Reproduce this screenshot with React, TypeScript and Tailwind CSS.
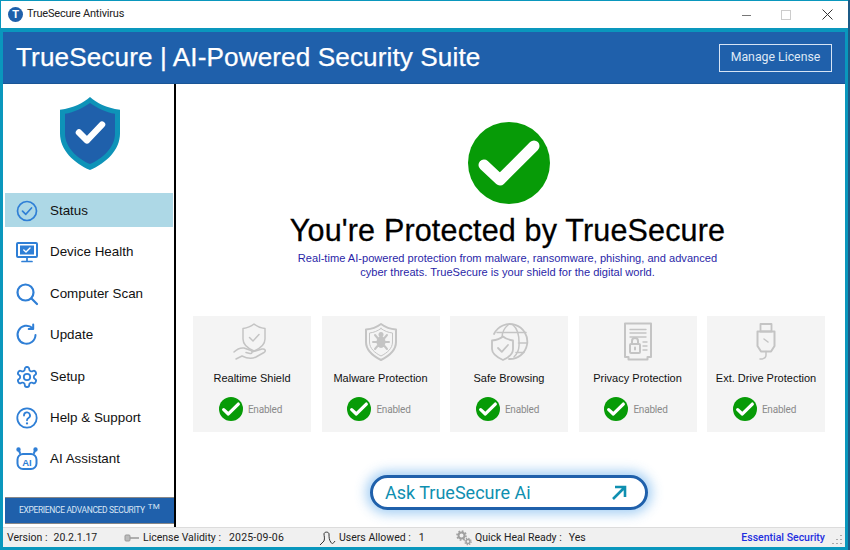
import type { ReactNode } from 'react'

const arial = 'font-["Liberation_Sans",Arial,sans-serif]'
const segoe = 'font-["Roboto",sans-serif]'

function Check({ size }: { size: number }) {
  return (
    <svg width={size} height={size} viewBox="0 0 82 82" className="shrink-0">
      <circle cx="41" cy="41" r="41" fill="#079b07" />
      <path d="M16 43 L32 58 L66 24" fill="none" stroke="#fff" strokeWidth="11" strokeLinecap="round" strokeLinejoin="round" />
    </svg>
  )
}

function Shield() {
  return (
    <svg width="62" height="75" viewBox="0 0 62 76" preserveAspectRatio="none">
      <path d="M31 1 C38 7 47 12 61 14 L61 38 C61 55 47 68 31 75 C15 68 1 55 1 38 L1 14 C15 12 24 7 31 1 Z" fill="#0e93b8" />
      <path d="M31 7 C38 12 47 16.500 56 18 L56 38 C56 52 44 63 31 69 C18 63 6 52 6 38 L6 18 C15 16.500 24 12 31 7 Z" fill="#1f60ab" />
      <path d="M20 37 L28 45 L43 29" fill="none" stroke="#fff" strokeWidth="6.500" strokeLinecap="round" strokeLinejoin="round" />
    </svg>
  )
}

const navIcon = { width: 24, height: 24, viewBox: '0 0 24 24', fill: 'none', stroke: '#2f7fd6', strokeWidth: 1.7, strokeLinecap: 'round', strokeLinejoin: 'round' } as const

const navItems: { label: string; icon: ReactNode }[] = [
  {
    label: 'Status',
    icon: (
      <svg {...navIcon}>
        <circle cx="12" cy="12" r="9.500" />
        <path d="M7.500 12.200 L10.800 15.300 L16.500 9" />
      </svg>
    ),
  },
  {
    label: 'Device Health',
    icon: (
      <svg {...navIcon}>
        <rect x="2" y="3" width="20" height="14" rx="1" strokeWidth="2" />
        <rect x="5" y="5.500" width="14" height="9" fill="#2f7fd6" stroke="none" />
        <path d="M8.800 10 L11 12 L15 8" stroke="#fff" strokeWidth="1.400" />
        <path d="M12 17 V21 M7 21.500 H17" />
      </svg>
    ),
  },
  {
    label: 'Computer Scan',
    icon: (
      <svg {...navIcon} strokeWidth={2.200}>
        <circle cx="10.500" cy="10.500" r="8" />
        <path d="M16.500 16.500 L22 22" />
      </svg>
    ),
  },
  {
    label: 'Update',
    icon: (
      <svg {...navIcon} strokeWidth={2}>
        <path d="M20.500 12 A9 9 0 1 1 17.500 5" />
        <path d="M18.200 1.500 V6 H13.700" />
      </svg>
    ),
  },
  {
    label: 'Setup',
    icon: (
      <svg {...navIcon} strokeWidth={1.800}>
        <path d="M12.220 2h-.44a2 2 0 0 0-2 2v.18a2 2 0 0 1-1 1.730l-.43.250a2 2 0 0 1-2 0l-.150-.080a2 2 0 0 0-2.730.730l-.220.380a2 2 0 0 0 .730 2.730l.150.100a2 2 0 0 1 1 1.720v.510a2 2 0 0 1-1 1.740l-.150.090a2 2 0 0 0-.730 2.730l.220.380a2 2 0 0 0 2.730.730l.150-.080a2 2 0 0 1 2 0l.430.250a2 2 0 0 1 1 1.730V20a2 2 0 0 0 2 2h.440a2 2 0 0 0 2-2v-.180a2 2 0 0 1 1-1.730l.430-.250a2 2 0 0 1 2 0l.150.080a2 2 0 0 0 2.730-.730l.220-.390a2 2 0 0 0-.730-2.730l-.150-.080a2 2 0 0 1-1-1.740v-.500a2 2 0 0 1 1-1.740l.150-.090a2 2 0 0 0 .730-2.730l-.220-.380a2 2 0 0 0-2.730-.730l-.150.080a2 2 0 0 1-2 0l-.430-.250a2 2 0 0 1-1-1.730V4a2 2 0 0 0-2-2z" />
        <circle cx="12" cy="12" r="3.200" />
      </svg>
    ),
  },
  {
    label: 'Help & Support',
    icon: (
      <svg {...navIcon} strokeWidth={1.800}>
        <circle cx="12" cy="12" r="9.700" />
        <path d="M9 9.500 A3 3 0 1 1 13.500 12 C12.500 12.600 12 13 12 14.300" />
        <path d="M12 17.300 V17.500" strokeWidth={2.200} />
      </svg>
    ),
  },
  {
    label: 'AI Assistant',
    icon: (
      <svg {...navIcon} strokeWidth={2}>
        <rect x="2.500" y="7" width="19" height="15" rx="5.500" />
        <path d="M5 6 L3.500 2.500 M19 6 L20.500 2.500" />
        <circle cx="3.500" cy="2.500" r="1.200" fill="#2f7fd6" />
        <circle cx="20.500" cy="2.500" r="1.200" fill="#2f7fd6" />
        <text x="12" y="18.500" textAnchor="middle" fontFamily="Liberation Sans, sans-serif" fontSize="9.500" fontWeight="700" fill="#2f7fd6" stroke="none">AI</text>
      </svg>
    ),
  },
]

const featureIcon = { width: 40, height: 40, viewBox: '0 0 40 40', fill: 'none', stroke: '#c4c4c4', strokeWidth: 1.500, strokeLinecap: 'round', strokeLinejoin: 'round' } as const

const features: { label: string; icon: ReactNode }[] = [
  {
    label: 'Realtime Shield',
    icon: (
      <svg {...featureIcon}>
        <path d="M22 2 C25 4.500 29 6 33 6.500 V17 C33 22.500 28 26.500 22 29 C16 26.500 11 22.500 11 17 V6.500 C15 6 19 4.500 22 2 Z" />
        <path d="M17.500 15.500 L21 19 L27 12.500" />
        <path d="M2 30 C5 27 8 25.500 12 26 L19 28.500 C21 29.500 20 32 18 31.500 L14 30.500 M20 30 L30 27 C33 26.500 34.500 29 32 30.500 L24 35 C20 37 14 36 10 34 L4 37" />
      </svg>
    ),
  },
  {
    label: 'Malware Protection',
    icon: (
      <svg {...featureIcon} strokeWidth={2}>
        <path d="M20 2 C24 5 29 7 35 7.500 V20 C35 28 28 34 20 38 C12 34 5 28 5 20 V7.500 C11 7 16 5 20 2 Z" />
        <path d="M20 6.500 C23.500 9 27 10.500 31.500 11 V20 C31.500 26.500 26 31 20 34 C14 31 8.500 26.500 8.500 20 V11 C13 10.500 16.500 9 20 6.500 Z" strokeWidth={1} />
        <ellipse cx="20" cy="20" rx="4.500" ry="6" fill="#c4c4c4" stroke="none" />
        <circle cx="20" cy="12.500" r="2.500" fill="#c4c4c4" stroke="none" />
        <path d="M14 13 L16.500 16 M26 13 L23.500 16 M12 20 H16 M28 20 H24 M14 27 L16.500 24 M26 27 L23.500 24" />
      </svg>
    ),
  },
  {
    label: 'Safe Browsing',
    icon: (
      <svg {...featureIcon}>
        <path d="M5 12 A17.500 17.500 0 1 1 20 37" strokeWidth={1.800} />
        <path d="M8 10.500 H37 M14 21 H20 M29.500 21 H38.500 M27 30.500 H35 M19 3 C14 7 13 11 13 16 M24 3 C29 7 30.500 14 30 24 C29.800 28 28 32 25 35" />
        <path d="M14 14.500 C17 17 20 18 24 18.500 V27 C24 32 19.500 35.500 14 38 C8.500 35.500 3 32 3 27 V18.500 C7.500 18 11 17 14 14.500 Z" stroke="#c4c4c4" fill="#f4f4f4" strokeWidth={1.800} />
        <path d="M9 26 L12.800 29.800 L19 23" strokeWidth={1.800} />
      </svg>
    ),
  },
  {
    label: 'Privacy Protection',
    icon: (
      <svg {...featureIcon} strokeWidth={2}>
        <path d="M7 1.500 H33 V35 H29.500 V37.500 H10.500 V35 H7 Z" />
        <path d="M12 7.500 H28 M12 11 H28 M12 15 H28 M25 20 H29 M25 24 H29 M25 28 H29" strokeWidth={1.400} />
        <rect x="12" y="22" width="10" height="9" rx="1" />
        <path d="M14 22 V19 A3 3 0 0 1 20 19 V22" />
        <path d="M17 25.500 V27.500" />
      </svg>
    ),
  },
  {
    label: 'Ext. Drive Protection',
    icon: (
      <svg {...featureIcon} strokeWidth={2}>
        <path d="M14.500 2 H25.500 V9.500 H14.500 Z" strokeWidth={1.800} />
        <path d="M11.500 9.500 H28.500 V24 L25 29.500 H15 L11.500 24 Z" />
        <path d="M18 17 L22 20 M20 29.500 V33 C20 36 18 37 14 37" strokeWidth={1.500} />
      </svg>
    ),
  },
]

function StatusItem({ children, className }: { children: ReactNode; className?: string }) {
  return <div className={`flex items-center ${className ?? ''}`}>{children}</div>
}

export default function App() {
  return (
    <div className="h-[550px] w-[850px] overflow-hidden border-r-2 border-[#1c5a86] bg-[#0a97bd] pb-[4px] pl-[3px] pr-[3px] pt-px">
      <div className="-ml-[2px] -mr-[3px] flex h-[27px] items-center bg-white pl-[7px]">
        <div className={`flex h-[15px] w-[15px] items-center justify-center rounded-full bg-[#1f60ab] text-[11px] font-bold leading-none text-white ${arial}`}>T</div>
        <span className={`ml-[4px] text-[11px] tracking-[-0.2px] text-[#222] ${segoe}`}>TrueSecure Antivirus</span>
        <div className="ml-auto flex items-center">
          <svg width="10" height="10" viewBox="0 0 10 10" className="mr-[29px]"><path d="M0 5.500 H9" stroke="#777" strokeWidth="1" /></svg>
          <svg width="10" height="10" viewBox="0 0 10 10" className="mr-[31px]"><rect x="0.500" y="0.500" width="9" height="9" fill="none" stroke="#ccc" /></svg>
          <svg width="11" height="11" viewBox="0 0 11 11" className="mr-[15px]"><path d="M0.500 0.500 L10.500 10.500 M10.500 0.500 L0.500 10.500" stroke="#333" strokeWidth="1" /></svg>
        </div>
      </div>
      <div className="mt-[4px] flex h-[52px] items-center justify-between border-b border-[#1a5596] bg-[#1f60ab] pl-[13px] pr-[13px]">
        <h1 className={`text-[26.150px] leading-none tracking-[0.1px] text-white [-webkit-text-stroke:0.25px_#fff] ${arial}`}>TrueSecure | AI-Powered Security Suite</h1>
        <button className={`h-[28px] w-[113px] border border-[#d6e4f5] text-[12.300px] text-[#dfe9f6] ${segoe}`}>Manage License</button>
      </div>
      <div className="flex h-[443px] bg-white">
        <aside className="flex w-[173px] flex-col border-r-2 border-black">
          <div className="flex h-[109px] justify-center pl-[3px] pt-[12px]">
            <Shield />
          </div>
          <nav className="flex flex-col">
            {navItems.map((item, i) => (
              <div key={item.label} className={`ml-[2px] mr-[1px] flex h-[34px] items-center pl-[10px] pt-[2px] ${i > 0 ? 'mt-[7.400px]' : 'bg-[#add8e6]'}`}>
                <span className="flex h-[24px] w-[24px] items-center justify-center">{item.icon}</span>
                <span className={`ml-[11px] text-[13.400px] text-[#111] ${arial}`}>{item.label}</span>
              </div>
            ))}
          </nav>
          <div className={`mb-[3px] ml-[2px] mt-auto flex h-[27px] items-center border-y border-[#888] bg-[#1f60ab] pl-[14px] text-[8.500px] text-[#d9e6f5] ${segoe}`}>
            <span className="tracking-[-0.35px]">EXPERIENCE ADVANCED SECURITY</span>
            <sup className="ml-[3px] text-[8px]">TM</sup>
          </div>
        </aside>
        <main className="flex flex-1 flex-col items-center pr-[3px]">
          <div className="mt-[38px]"><Check size={82} /></div>
          <h2 className={`-ml-[3px] mt-[8px] text-[30.500px] leading-[36px] tracking-[0.17px] text-black [-webkit-text-stroke:0.3px_#000] ${arial}`}>You're Protected by TrueSecure</h2>
          <p className={`-ml-[3px] mt-[3px] w-[440px] text-center text-[11.100px] leading-[14px] text-[#2a1fa8] ${arial}`}>
            Real-time AI-powered protection from malware, ransomware, phishing, and advanced cyber threats. TrueSecure is your shield for the digital world.
          </p>
          <div className="mt-[37px] flex gap-[10.500px]">
            {features.map(f => (
              <div key={f.label} className="flex h-[116px] w-[118px] flex-col items-center bg-[#f4f4f4] pt-[6px]">
                {f.icon}
                <div className={`mt-[8px] whitespace-nowrap text-[11px] leading-[16px] text-[#111] ${arial}`}>{f.label}</div>
                <div className="mt-[11px] flex items-center pr-[3px]">
                  <Check size={24} />
                  <span className={`ml-[5px] text-[10px] tracking-[-0.2px] text-[#8a8a8a] ${segoe}`}>Enabled</span>
                </div>
              </div>
            ))}
          </div>
          <button className={`mt-[43px] flex h-[35px] w-[278px] items-center justify-between rounded-full border-[3px] border-[#1f60ab] bg-white pl-[12px] pr-[18px] text-[18px] text-[#0f8fb0] shadow-[0_0_12px_4px_rgba(60,150,230,0.45)] ${segoe}`}>
            <span>Ask TrueSecure Ai</span>
            <svg width="16" height="16" viewBox="0 0 16 16"><path d="M2 14 L14 2 M4 2 H14 V12" fill="none" stroke="#0f8fb0" strokeWidth="2.600" /></svg>
          </button>
        </main>
      </div>
      <div className={`relative flex h-[20px] items-center border-t border-[#dcdcdc] bg-[#f0f0f0] pt-px text-[10.500px] text-[#222] ${segoe}`}>
        <StatusItem className="ml-[4px] w-[117px]"><span>Version :</span><span className="ml-[6px]">20.2.1.17</span></StatusItem>
        <StatusItem className="w-[195px]">
          <svg width="16" height="8" viewBox="0 0 16 8" className="mr-[3px]"><rect x="1" y="1" width="5" height="6" rx="1" fill="#bbb" stroke="#999" /><path d="M6 4 H15" stroke="#999" strokeWidth="1.500" /></svg>
          <span>License Validity :</span><span className="ml-[8px] tracking-[0.2px]">2025-09-06</span>
        </StatusItem>
        <StatusItem className="w-[137px]">
          <svg width="18" height="16" viewBox="0 0 18 16" className="mr-[2px]"><path d="M1 15 L5 11 C6 8 5 6 5 4 C5 1.500 10 1.500 10 4 C10 7 10 10 12 12.500 C13 14 14 14 16 11" fill="none" stroke="#333" /></svg>
          <span>Users Allowed :</span><span className="ml-[8px]">1</span>
        </StatusItem>
        <StatusItem>
          <svg width="16" height="16" viewBox="0 0 16 16" className="mr-[3px]"><circle cx="5.500" cy="5.500" r="3" fill="none" stroke="#a0a0a0" strokeWidth="2" /><circle cx="5.500" cy="5.500" r="4.500" fill="none" stroke="#a0a0a0" strokeWidth="1.600" strokeDasharray="1.700 1.800" /><circle cx="12" cy="11.500" r="2" fill="none" stroke="#a0a0a0" strokeWidth="1.500" /><circle cx="12" cy="11.500" r="3.200" fill="none" stroke="#a0a0a0" strokeWidth="1.200" strokeDasharray="1.300 1.200" /></svg>
          <span>Quick Heal Ready :</span><span className="ml-[7px]">Yes</span>
        </StatusItem>
        <span className="ml-auto mr-[20px] font-medium text-[#1f2fdf]">Essential Security</span>
        <svg width="11" height="11" viewBox="0 0 11 11" className="absolute bottom-[2px] right-[2px]"><path d="M9 1 V2 M9 5 V6 M5 5 V6 M9 9 V10 M5 9 V10 M1 9 V10" stroke="#aaa" strokeWidth="2" /></svg>
      </div>
    </div>
  )
}
